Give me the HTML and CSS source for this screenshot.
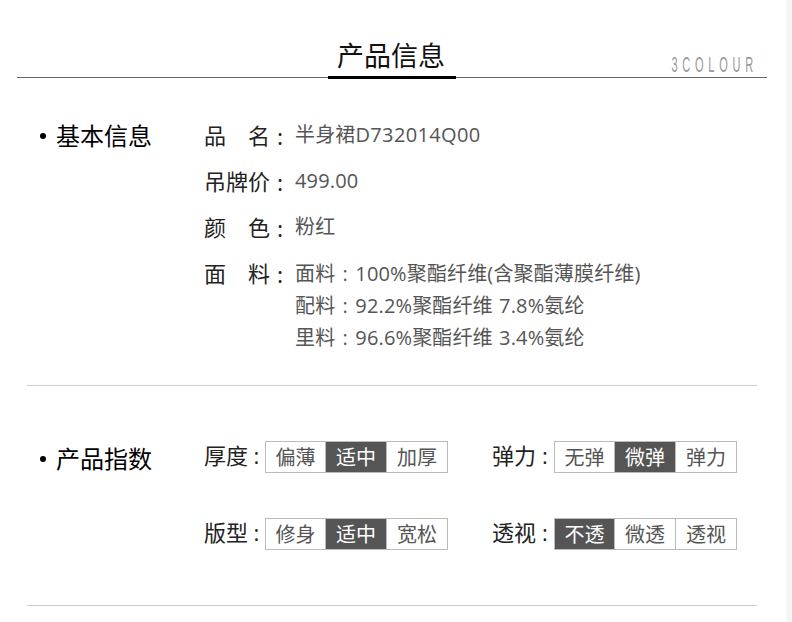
FILE: index.html
```html
<!DOCTYPE html>
<html lang="zh">
<head>
<meta charset="utf-8">
<title>产品信息</title>
<link rel="stylesheet" href="styles.css">
</head>
<body>
<main class="page">
  <header class="head">
    <h1 class="title">产品信息</h1>
    <span class="brand">3COLOUR</span>
  </header>

  <section class="section basic">
    <h2 class="sec-name"><span class="dot"></span>基本信息</h2>
    <div class="rows">
      <div class="row"><span class="key"><span>品</span><span>名</span></span><span class="colon">:</span><span class="val">半身裙<span class="code">D732014Q00</span></span></div>
      <div class="row"><span class="key">吊牌价</span><span class="colon">:</span><span class="val">499.00</span></div>
      <div class="row"><span class="key"><span>颜</span><span>色</span></span><span class="colon">:</span><span class="val">粉红</span></div>
      <div class="row multi"><span class="key"><span>面</span><span>料</span></span><span class="colon">:</span>
        <div class="val lines">
          <div>面料<span class="fw">:</span>100%聚酯纤维(含聚酯薄膜纤维)</div>
          <div>配料<span class="fw">:</span>92.2%聚酯纤维 7.8%氨纶</div>
          <div>里料<span class="fw">:</span>96.6%聚酯纤维 3.4%氨纶</div>
        </div>
      </div>
    </div>
  </section>

  <section class="section index">
    <h2 class="sec-name"><span class="dot"></span>产品指数</h2>
    <div class="grid">
      <div class="metric"><span class="m-key">厚度</span><span class="m-colon">:</span><div class="opts"><span>偏薄</span><span class="on">适中</span><span>加厚</span></div></div>
      <div class="metric"><span class="m-key">弹力</span><span class="m-colon">:</span><div class="opts"><span>无弹</span><span class="on">微弹</span><span>弹力</span></div></div>
      <div class="metric"><span class="m-key">版型</span><span class="m-colon">:</span><div class="opts"><span>修身</span><span class="on">适中</span><span>宽松</span></div></div>
      <div class="metric"><span class="m-key">透视</span><span class="m-colon">:</span><div class="opts"><span class="on">不透</span><span>微透</span><span>透视</span></div></div>
    </div>
  </section>
</main>
</body>
</html>
```

FILE: styles.css
```css
* { box-sizing: border-box; }
html, body { margin: 0; height: 100%; }
body {
  width: 792px;
  height: 622px;
  overflow: hidden;
  background: #fff;
  font-family: "Open Sans", "Noto Sans CJK SC", sans-serif;
  color: #000;
  border-right: 6px solid #f5f5f5;
}
.page { width: 786px; padding: 0 19px 0 17px; }
.head {
  position: relative;
  height: 78px;
  border-bottom: 1px solid #666;
  display: flex;
  justify-content: center;
}
.title {
  margin: 36px 0 0;
  width: 128px;
  height: 43px;
  flex: none;
  padding-right: 2px;
  font-size: 27px;
  font-weight: 400;
  line-height: 38px;
  text-align: center;
  color: #111;
  border-bottom: 3px solid #000;
  font-family: "Noto Sans CJK SC", sans-serif;
}
.brand {
  position: absolute;
  right: 9px;
  top: 53px;
  font: 400 22px/24px "Liberation Sans Narrow", "Liberation Sans", sans-serif;
  letter-spacing: 9.5px;
  color: #999;
  transform: scaleX(.5);
  transform-origin: right top;
}
.section {
  margin: 0 10px;
  display: flex;
  border-bottom: 1px solid #ccc;
}
.basic { height: 308px; padding-top: 37px; }
.index { height: 220px; padding-top: 52px; }
.sec-name {
  margin: 0;
  width: 177px;
  padding-left: 13px;
  font-size: 24px;
  font-weight: 400;
  line-height: 40px;
  display: flex;
  align-items: center;
  align-self: flex-start;
  color: #000;
  font-family: "Noto Sans CJK SC", sans-serif;
}
.dot {
  width: 6px;
  height: 6px;
  border-radius: 50%;
  background: #000;
  margin: 2px 10px 0 0;
}
.rows { display: flex; flex-direction: column; }
.row { display: flex; height: 46px; font-size: 22px; line-height: 40px; }
.multi { height: auto; }
.key { width: 66px; display: flex; justify-content: space-between; color: #222; }
.colon { width: 25px; padding-left: 7px; color: #222; font-family: "Noto Sans CJK SC", sans-serif; }
.val { color: #555; font-size: 20px; letter-spacing: .15px; word-spacing: 1px; }
.code { letter-spacing: .35px; }
.lines { line-height: 32px; padding-top: 5px; }
.fw { display: inline-block; width: 20px; text-align: center; }
.grid {
  display: grid;
  grid-template-columns: 288px auto;
  row-gap: 45px;
  align-content: start;
  margin-top: 3px;
}
.metric { display: flex; align-items: flex-start; height: 32px; font-size: 22px; line-height: 28px; color: #222; }
.m-key { width: 44px; }
.m-colon { width: 17px; text-align: center; }
.metric:nth-child(even) .m-colon { width: 18px; }
.opts { display: flex; border: 1px solid #bbb; height: 32px; }
.opts span {
  width: 61px;
  font-size: 20px;
  line-height: 32px;
  text-align: center;
  color: #555;
  border-left: 1px solid #bbb;
}
.opts span:first-child { border-left: 0; width: 59px; }
.opts .on { background: #555; color: #fff; }
```
